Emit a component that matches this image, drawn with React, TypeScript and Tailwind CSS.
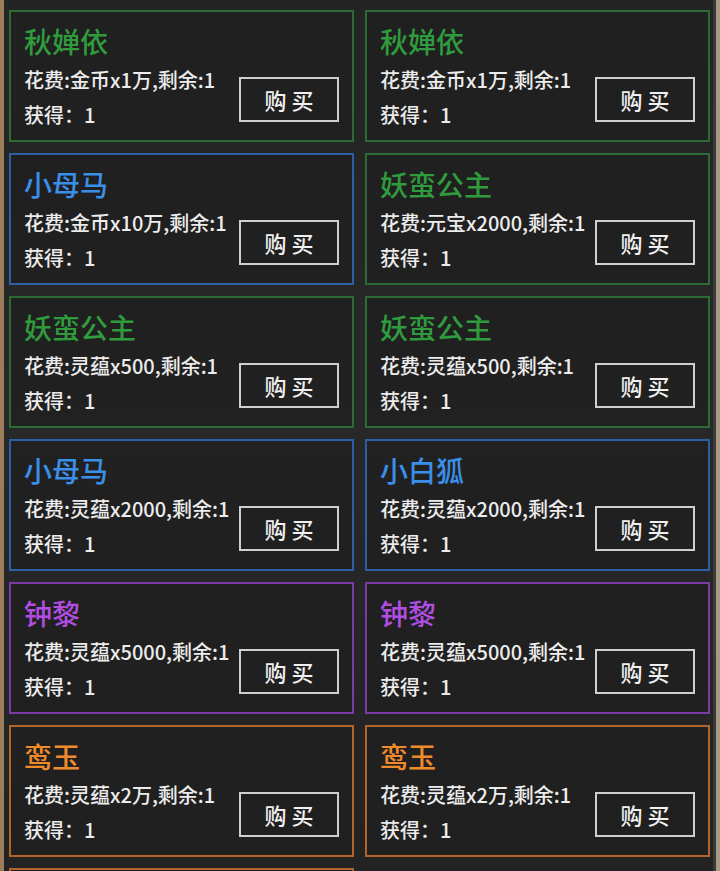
type Tier = 'green' | 'blue' | 'purple' | 'orange';

type Item = {
  name: string;
  cost: string;
  tier: Tier;
};

const tierStyles: Record<Tier, { border: string; title: string }> = {
  green: { border: 'border-[#2c6b34]', title: 'text-[#2f9b3d]' },
  blue: { border: 'border-[#2c5fa6]', title: 'text-[#3a8fe8]' },
  purple: { border: 'border-[#7c3aa4]', title: 'text-[#b04ee2]' },
  orange: { border: 'border-[#b2652a]', title: 'text-[#f08b2c]' },
};

const items: Item[] = [
  { name: '秋婵依', cost: '金币x1万', tier: 'green' },
  { name: '秋婵依', cost: '金币x1万', tier: 'green' },
  { name: '小母马', cost: '金币x10万', tier: 'blue' },
  { name: '妖蛮公主', cost: '元宝x2000', tier: 'green' },
  { name: '妖蛮公主', cost: '灵蕴x500', tier: 'green' },
  { name: '妖蛮公主', cost: '灵蕴x500', tier: 'green' },
  { name: '小母马', cost: '灵蕴x2000', tier: 'blue' },
  { name: '小白狐', cost: '灵蕴x2000', tier: 'blue' },
  { name: '钟黎', cost: '灵蕴x5000', tier: 'purple' },
  { name: '钟黎', cost: '灵蕴x5000', tier: 'purple' },
  { name: '鸾玉', cost: '灵蕴x2万', tier: 'orange' },
  { name: '鸾玉', cost: '灵蕴x2万', tier: 'orange' },
];

const ShopCard = ({ item }: { item: Item }) => {
  const style = tierStyles[item.tier];
  return (
    <div className={`h-[132px] border-2 ${style.border} bg-[#1f1f1f]/80 pl-[13px] pr-[13px] pt-[12px]`}>
      <div className={`text-[28px] font-medium leading-[34px] ${style.title}`}>{item.name}</div>
      <div className="mt-[4px] flex items-center justify-between">
        <div className="text-[20px] font-medium text-[#ececec]">
          <div className="leading-[35px]">花费:{item.cost},剩余:1</div>
          <div className="leading-[35px]">获得：1</div>
        </div>
        <button className="mt-[4px] flex h-[45px] w-[100px] items-center justify-center border-2 border-[#cfcfcf] text-[22px] font-medium text-[#f0f0f0]">
          购 买
        </button>
      </div>
    </div>
  );
};

const App = () => {
  return (
    <div
      className="flex h-[871px] w-[720px] overflow-hidden bg-[#252525]"
      style={{ fontFamily: '"Noto Sans CJK SC", "Noto Sans", sans-serif' }}
    >
      <div className="w-[4px] shrink-0 bg-[#9c7d5c]" />
      <div className="flex-1 bg-gradient-to-b from-[#242424] via-[#282828] to-[#232323] pl-[5px] pt-[10px]">
        <div className="grid grid-cols-[345px_345px] gap-x-[11px] gap-y-[11px]">
          {items.map((item, i) => (
            <ShopCard key={i} item={item} />
          ))}
          {/* next row, scrolled below the fold */}
          <div className="h-[132px] border-2 border-[#b2652a] bg-[#1f1f1f]/80" />
        </div>
      </div>
      <div className="w-[3px] shrink-0 bg-[#3a3a38]" />
      <div className="w-[4px] shrink-0 bg-[#a89a86]" />
    </div>
  );
};

export default App;
